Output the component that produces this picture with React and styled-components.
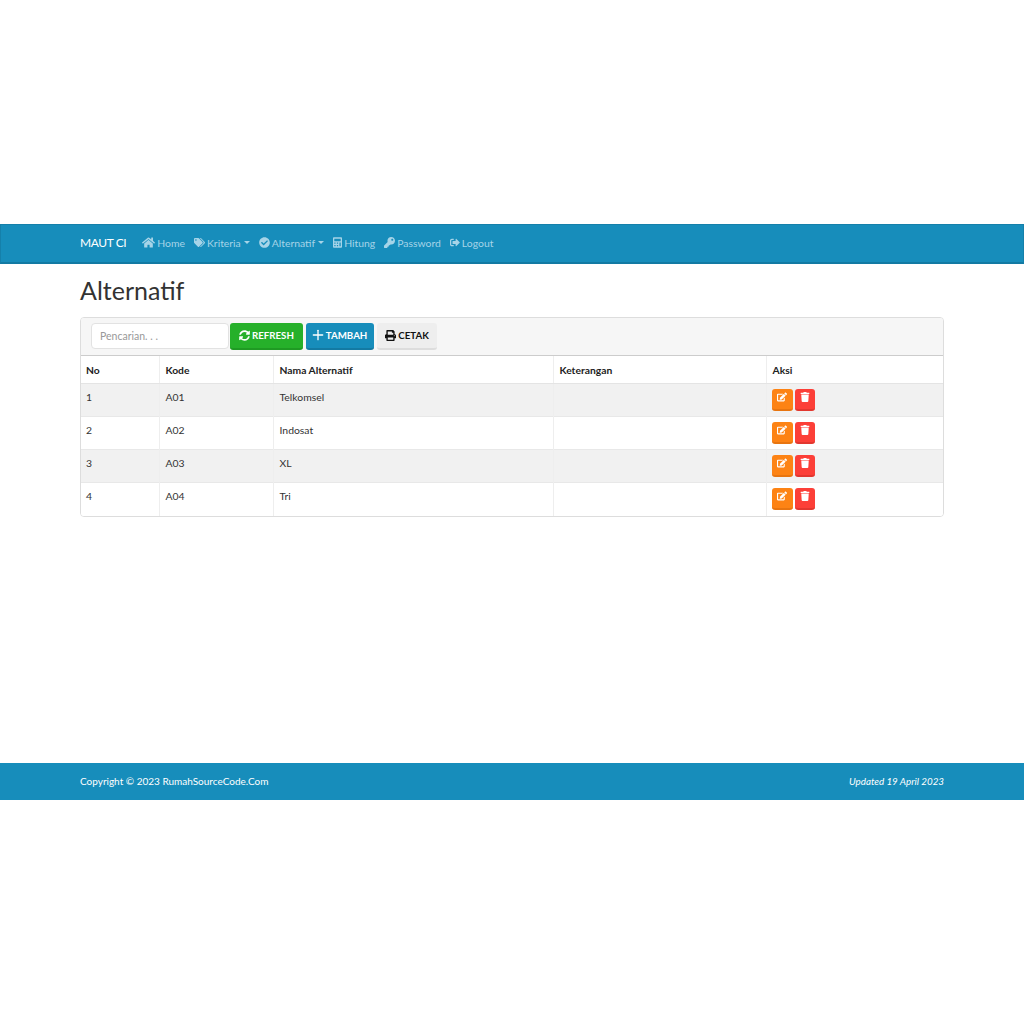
import styled, { createGlobalStyle } from "styled-components";
import { Plus } from "lucide-react";
import {
  FaHome,
  FaTags,
  FaCheckCircle,
  FaCalculator,
  FaKey,
  FaSignOutAlt,
  FaSyncAlt,
  FaPrint,
  FaEdit,
  FaTrash,
} from "react-icons/fa";

const GlobalStyle = createGlobalStyle`
  html, body {
    margin: 0;
    padding: 0;
    background: #fff;
  }
  body {
    font-family: "Lato", "Open Sans", sans-serif;
    color: #222;
  }
`;

const Screen = styled.div`
  height: 1024px;
  display: flex;
  align-items: center;
`;

const Page = styled.div`
  width: 100%;
  height: 576px;
  display: flex;
  flex-direction: column;
`;

const Navbar = styled.nav`
  height: 40px;
  box-sizing: border-box;
  background: #178dbb;
  border: 1px solid #1580aa;
  border-bottom: 2px solid #137aa3;
  padding: 0 79px 2px;
  display: flex;
  align-items: center;
`;

const Brand = styled.span`
  color: #fff;
  font-size: 12px;
  letter-spacing: -0.4px;
  margin-right: 16px;
`;

const NavItem = styled.span`
  color: #a6d4e8;
  font-size: 10.4px;
  margin-right: 9px;
  display: flex;
  align-items: center;
  gap: 2px;
  svg {
    width: ${(p) => p.$icon}px;
    height: 13px;
  }
`;

const Caret = styled.i`
  width: 0;
  height: 0;
  margin-left: 1px;
  border-left: 3px solid transparent;
  border-right: 3px solid transparent;
  border-top: 3px solid #a6d4e8;
`;

const Main = styled.main`
  flex: 1;
  padding: 0 80px;
`;

const Title = styled.h1`
  margin: 11px 0 12px;
  font-size: 25px;
  line-height: 30px;
  font-weight: 400;
  color: #333;
`;

const Panel = styled.section`
  border: 1px solid #ddd;
  border-radius: 4px;
  overflow: hidden;
`;

const Toolbar = styled.div`
  height: 38px;
  box-sizing: border-box;
  background: #f6f6f6;
  border-bottom: 1px solid #ccc;
  padding: 5px 10px 0;
  display: flex;
  gap: 3px;
`;

const Search = styled.input`
  width: 138px;
  height: 26px;
  margin-right: -2px;
  box-sizing: border-box;
  border: 1px solid #e2e2e2;
  border-radius: 4px;
  background: #fff;
  padding: 0 8px;
  font: 10.5px "Lato", sans-serif;
  &::placeholder {
    color: #999;
  }
`;

const ActionButton = styled.button`
  height: 27px;
  box-sizing: border-box;
  padding: 0 ${(p) => p.$px}px 1px;
  border: 0;
  border-bottom: 2px solid ${(p) => p.$edge};
  border-radius: 3px;
  background: ${(p) => p.$bg};
  color: ${(p) => p.$fg};
  font: 700 9.7px "Lato", sans-serif;
  display: flex;
  align-items: center;
  gap: 2px;
  svg {
    font-size: 11px;
  }
`;

const PlusIcon = styled(Plus)`
  margin: 0 -2.5px;
`;

const Table = styled.table`
  width: 100%;
  border-collapse: collapse;
  table-layout: fixed;
  font-size: 10.4px;
`;

const Th = styled.th`
  height: 27px;
  padding: 0 5px 0 6px;
  text-align: left;
  font-size: 10.3px;
  font-weight: 700;
  color: #222;
  border-bottom: 1px solid #e4e4e4;
  border-left: 1px solid #eee;
  &:first-child {
    border-left: 0;
    padding-left: 5px;
  }
`;

const Row = styled.tr`
  background: ${(p) => (p.$odd ? "#f1f1f1" : "#fff")};
`;

const Td = styled.td`
  height: 33px;
  box-sizing: border-box;
  padding: 0 5px 6px 6px;
  color: #333;
  border-top: 1px solid #e8e8e8;
  border-left: 1px solid #eee;
  &:first-child {
    border-left: 0;
    padding-left: 5px;
  }
`;

const ActionCell = styled(Td)`
  padding: 0 5px;
`;

const IconGroup = styled.div`
  display: flex;
  gap: 2px;
`;

const IconButton = styled.button`
  width: ${(p) => p.$w}px;
  height: 22px;
  padding: 0 0 4px;
  border: 0;
  border-bottom: 2px solid ${(p) => p.$edge};
  border-radius: 3px;
  background: ${(p) => p.$bg};
  color: #fff;
  display: flex;
  align-items: center;
  justify-content: center;
  font-size: 10px;
`;

const Footer = styled.footer`
  height: 37px;
  box-sizing: border-box;
  padding: 0 80px 2px;
  background: #178dbb;
  color: #fff;
  font-size: 10px;
  display: flex;
  align-items: center;
  justify-content: space-between;
`;

const Updated = styled.em`
  font-style: italic;
  font-size: 9.8px;
`;

const rows = [
  { no: 1, kode: "A01", nama: "Telkomsel" },
  { no: 2, kode: "A02", nama: "Indosat" },
  { no: 3, kode: "A03", nama: "XL" },
  { no: 4, kode: "A04", nama: "Tri" },
];

export default function App() {
  return (
    <>
      <GlobalStyle />
      <Screen>
        <Page>
          <Navbar>
            <Brand>MAUT CI</Brand>
            <NavItem $icon={13}><FaHome />Home</NavItem>
            <NavItem $icon={11}><FaTags />Kriteria<Caret /></NavItem>
            <NavItem $icon={11}><FaCheckCircle />Alternatif<Caret /></NavItem>
            <NavItem $icon={9}><FaCalculator />Hitung</NavItem>
            <NavItem $icon={11}><FaKey />Password</NavItem>
            <NavItem $icon={10}><FaSignOutAlt />Logout</NavItem>
          </Navbar>
          <Main>
            <Title>Alternatif</Title>
            <Panel>
              <Toolbar>
                <Search placeholder="Pencarian. . ." />
                <ActionButton $px={9} $bg="#26b02a" $edge="#1f9a23" $fg="#fff"><FaSyncAlt />REFRESH</ActionButton>
                <ActionButton $px={7} $bg="#178dbb" $edge="#137aa3" $fg="#fff"><PlusIcon size={16} strokeWidth={2} />TAMBAH</ActionButton>
                <ActionButton $px={8} $bg="#eee" $edge="#ddd" $fg="#111"><FaPrint />CETAK</ActionButton>
              </Toolbar>
              <Table>
                <colgroup>
                  <col style={{ width: 78 }} />
                  <col style={{ width: 114 }} />
                  <col style={{ width: 280 }} />
                  <col style={{ width: 213 }} />
                  <col />
                </colgroup>
                <thead>
                  <tr>
                    <Th>No</Th>
                    <Th>Kode</Th>
                    <Th>Nama Alternatif</Th>
                    <Th>Keterangan</Th>
                    <Th>Aksi</Th>
                  </tr>
                </thead>
                <tbody>
                  {rows.map((row, i) => (
                    <Row key={row.no} $odd={i % 2 === 0}>
                      <Td>{row.no}</Td>
                      <Td>{row.kode}</Td>
                      <Td>{row.nama}</Td>
                      <Td />
                      <ActionCell>
                        <IconGroup>
                          <IconButton $w={21} $bg="#fd8314" $edge="#e87510"><FaEdit /></IconButton>
                          <IconButton $w={20} $bg="#fc3f38" $edge="#e2372f"><FaTrash /></IconButton>
                        </IconGroup>
                      </ActionCell>
                    </Row>
                  ))}
                </tbody>
              </Table>
            </Panel>
          </Main>
          <Footer>
            <span>Copyright © 2023 RumahSourceCode.Com</span>
            <Updated>Updated 19 April 2023</Updated>
          </Footer>
        </Page>
      </Screen>
    </>
  );
}
